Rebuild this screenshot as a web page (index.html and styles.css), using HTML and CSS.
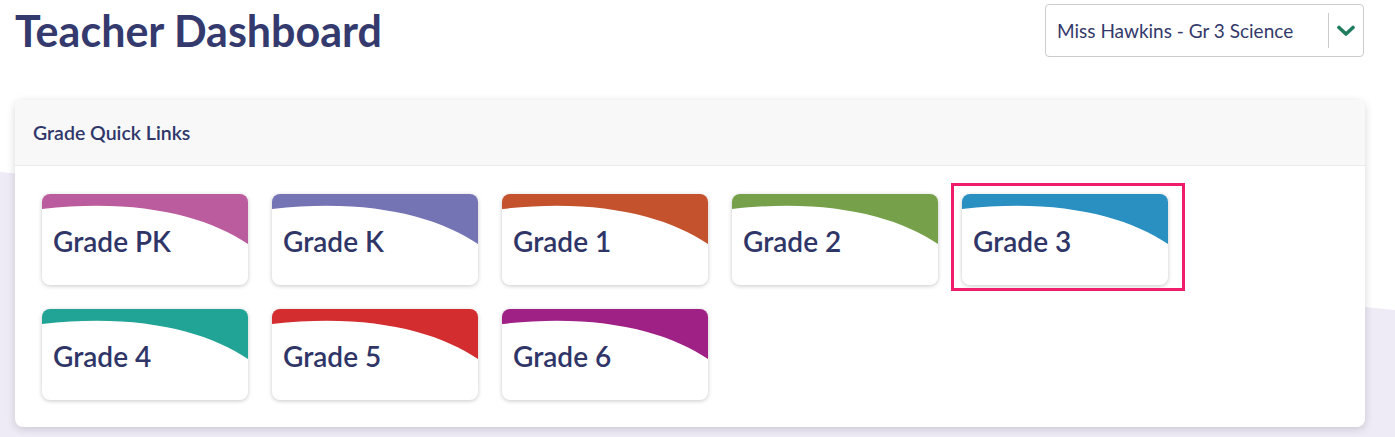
FILE: index.html
```html
<!DOCTYPE html>
<html>
<head>
  <title>Teacher Dashboard</title>
  <meta name="viewport" content="width=device-width, initial-scale=1.0">
  <link rel="stylesheet" href="styles.css">
</head>
<body>
  <div class="bg-shape"></div>
  <div class="page">
    <header class="top-bar">
      <h1>Teacher Dashboard</h1>
      <div class="class-select">
        <span class="class-select-label">Miss Hawkins - Gr 3 Science</span>
        <span class="class-select-arrow">
          <svg width="18" height="12" viewBox="0 0 18 12"><path d="M2 2.5 L9 9 L16 2.5" fill="none" stroke="#1f7d5c" stroke-width="3.6" stroke-linecap="round" stroke-linejoin="round"/></svg>
        </span>
      </div>
    </header>

    <section class="panel">
      <div class="panel-head">Grade Quick Links</div>
      <div class="panel-body">
        <div class="grade-grid">
          <a class="grade-card" style="--tab: #bb5c9e;"><svg class="grade-wave" viewBox="0 0 206 91" preserveAspectRatio="none"><path d="M0 0 H206 V50 C165 22 95 4 0 15 Z"/></svg><span>Grade PK</span></a>
          <a class="grade-card" style="--tab: #7473b4;"><svg class="grade-wave" viewBox="0 0 206 91" preserveAspectRatio="none"><path d="M0 0 H206 V50 C165 22 95 4 0 15 Z"/></svg><span>Grade K</span></a>
          <a class="grade-card" style="--tab: #c4522d;"><svg class="grade-wave" viewBox="0 0 206 91" preserveAspectRatio="none"><path d="M0 0 H206 V50 C165 22 95 4 0 15 Z"/></svg><span>Grade 1</span></a>
          <a class="grade-card" style="--tab: #76a14a;"><svg class="grade-wave" viewBox="0 0 206 91" preserveAspectRatio="none"><path d="M0 0 H206 V50 C165 22 95 4 0 15 Z"/></svg><span>Grade 2</span></a>
          <a class="grade-card selected" style="--tab: #2a8fc1;"><svg class="grade-wave" viewBox="0 0 206 91" preserveAspectRatio="none"><path d="M0 0 H206 V50 C165 22 95 4 0 15 Z"/></svg><span>Grade 3</span></a>
          <a class="grade-card" style="--tab: #21a396;"><svg class="grade-wave" viewBox="0 0 206 91" preserveAspectRatio="none"><path d="M0 0 H206 V50 C165 22 95 4 0 15 Z"/></svg><span>Grade 4</span></a>
          <a class="grade-card" style="--tab: #d32d2f;"><svg class="grade-wave" viewBox="0 0 206 91" preserveAspectRatio="none"><path d="M0 0 H206 V50 C165 22 95 4 0 15 Z"/></svg><span>Grade 5</span></a>
          <a class="grade-card" style="--tab: #a02185;"><svg class="grade-wave" viewBox="0 0 206 91" preserveAspectRatio="none"><path d="M0 0 H206 V50 C165 22 95 4 0 15 Z"/></svg><span>Grade 6</span></a>
        </div>
      </div>
    </section>
  </div>
</body>
</html>
```

FILE: styles.css
```css
body {
  margin: 0;
  background: #ffffff;
  font-family: Lato, "Open Sans", sans-serif;
  color: #30376b;
  position: relative;
  min-height: 437px;
  overflow: hidden;
}

/* lavender backdrop behind the panel */
.bg-shape {
  position: absolute;
  left: 0;
  top: 0;
  width: 100%;
  height: 100%;
  background: #eeebf7;
  clip-path: polygon(0 172px, 100% 310px, 100% 100%, 0 100%);
  z-index: 0;
}

.page {
  position: relative;
  z-index: 1;
  padding: 4px 30px 0 15px;
}

.top-bar {
  display: flex;
  justify-content: space-between;
  align-items: flex-start;
}

h1 {
  margin: 0;
  font-size: 43px;
  line-height: 53px;
  font-weight: 700;
  color: #343a6e;
}

.class-select {
  display: flex;
  align-items: center;
  width: 317px;
  height: 51px;
  margin-right: 1px;
  border: 1px solid #cccccc;
  border-radius: 4px;
  background: #ffffff;
}

.class-select-label {
  flex: 1;
  padding-left: 11px;
  font-size: 19px;
  color: #33396a;
}

.class-select-arrow {
  display: flex;
  align-items: center;
  justify-content: center;
  width: 34px;
  height: 35px;
  border-left: 1px solid #cccccc;
}

.panel {
  margin-top: 43px;
  background: #ffffff;
  border-radius: 8px;
  box-shadow: 0 2px 8px rgba(0, 0, 0, 0.16);
  overflow: hidden;
}

.panel-head {
  display: flex;
  align-items: center;
  height: 65px;
  padding: 0 18px;
  background: #f8f8f8;
  border-bottom: 1px solid #ebebeb;
  font-size: 19.5px;
  font-weight: 600;
  color: #2f366a;
}

.panel-body {
  padding: 28px 27px 27px;
}

.grade-grid {
  display: grid;
  grid-template-columns: repeat(5, 206px);
  grid-auto-rows: 91px;
  gap: 24px;
}

.grade-card {
  position: relative;
  display: block;
  border-radius: 8px;
  background: #ffffff;
  box-shadow: 0 1px 4px rgba(0, 0, 0, 0.22);
  cursor: pointer;
}

.grade-wave {
  position: absolute;
  left: 0;
  top: 0;
  width: 100%;
  height: 100%;
  border-radius: 8px;
  fill: var(--tab);
}

.grade-card span {
  position: relative;
  display: block;
  padding: 30px 0 0 11px;
  font-size: 28px;
  line-height: 34px;
  font-weight: 600;
  color: #2f3567;
}

.grade-card.selected::after {
  content: "";
  position: absolute;
  top: -11px;
  left: -11px;
  right: -17px;
  bottom: -6px;
  border: 3px solid #f01d6b;
}
```
